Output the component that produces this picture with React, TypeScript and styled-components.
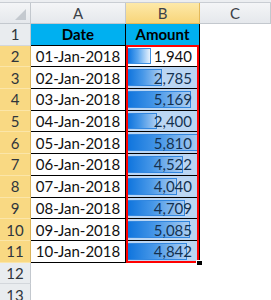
import React from "react";
import styled, { createGlobalStyle, css } from "styled-components";

const GlobalStyle = createGlobalStyle`
  html, body {
    margin: 0;
    padding: 0;
    background: #ffffff;
    overflow: hidden;
  }
  body {
    font-family: "Lato", "Liberation Sans", sans-serif;
  }
`;

const rows = [
  { date: "01-Jan-2018", amount: 1940 },
  { date: "02-Jan-2018", amount: 2785 },
  { date: "03-Jan-2018", amount: 5169 },
  { date: "04-Jan-2018", amount: 2400 },
  { date: "05-Jan-2018", amount: 5810 },
  { date: "06-Jan-2018", amount: 4522 },
  { date: "07-Jan-2018", amount: 4040 },
  { date: "08-Jan-2018", amount: 4709 },
  { date: "09-Jan-2018", amount: 5085 },
  { date: "10-Jan-2018", amount: 4842 },
];

const maxAmount = Math.max(...rows.map((r) => r.amount));
const BAR_SPACE = 72;

const Sheet = styled.div`
  display: grid;
  grid-template-columns: 31px 95px 74px 71px;
  grid-template-rows: 3px 21px repeat(13, 21.7px);
  width: 271px;
  height: 300px;
  overflow: hidden;
  font-size: 15px;
  color: #111;
`;

const TopStrip = styled.div`
  grid-column: 1 / -1;
  background: #eceef1;
  border-bottom: 1px solid #c9cdd3;
  box-sizing: border-box;
`;

const Corner = styled.div`
  display: flex;
  align-items: flex-end;
  justify-content: flex-end;
  padding: 0 4px 3px 0;
  background: linear-gradient(#f4f5f7, #e5e8ec);
  border-right: 1px solid #c3c8ce;
  border-bottom: 1px solid #c3c8ce;
  box-sizing: border-box;
`;

const ColHeader = styled.div<{ $active?: boolean }>`
  display: flex;
  align-items: center;
  justify-content: center;
  color: #3c4148;
  font-size: 15px;
  box-sizing: border-box;
  border-right: 1px solid #c3c8ce;
  border-bottom: 1px solid #c3c8ce;
  background: linear-gradient(#f4f5f7, #e5e8ec);
  ${(p) =>
    p.$active &&
    css`
      background: linear-gradient(#fde9a9, #f8d57a);
      border-right-color: #e4b95a;
      border-bottom-color: #e4b95a;
    `}
`;

const RowHeader = styled.div<{ $active?: boolean }>`
  display: flex;
  align-items: center;
  justify-content: center;
  color: #2f353c;
  font-size: 15px;
  box-sizing: border-box;
  background: #e9ecef;
  border-right: 1px solid #c3c8ce;
  border-bottom: 1px solid #d3d7dc;
  ${(p) =>
    p.$active &&
    css`
      background: #f9d983;
      border-right-color: #d9b35a;
      border-bottom-color: #fbe5a8;
    `}
`;

const Cell = styled.div<{ $head?: boolean }>`
  display: flex;
  align-items: center;
  justify-content: center;
  box-sizing: border-box;
  border-right: 1px solid #000;
  border-bottom: 1px solid #000;
  background: #fff;
  white-space: nowrap;
  ${(p) =>
    p.$head &&
    css`
      background: #00b0f0;
      font-weight: 700;
      color: #000;
    `}
`;

const AmountCell = styled.div<{ $tinted?: boolean; $first?: boolean; $last?: boolean }>`
  position: relative;
  display: flex;
  align-items: center;
  justify-content: flex-end;
  padding-right: 7px;
  box-sizing: border-box;
  border-right: 1px solid #000;
  border-bottom: 1px solid #000;
  background: #fff;

  &::before {
    content: "";
    position: absolute;
    left: 0;
    right: 0;
    top: ${(p) => (p.$first ? "-1px" : "0")};
    bottom: ${(p) => (p.$last ? "-1px" : "-1px")};
    border-left: 2px solid #ff0000;
    border-right: 2px solid #ff0000;
    border-top: ${(p) => (p.$first ? "2px solid #ff0000" : "none")};
    border-bottom: ${(p) => (p.$last ? "2px solid #ff0000" : "none")};
    z-index: 3;
    pointer-events: none;
  }

  ${(p) =>
    p.$tinted &&
    css`
      &::after {
        content: "";
        position: absolute;
        inset: 0;
        background: rgba(30, 120, 215, 0.3);
        z-index: 2;
      }
    `}
`;

const DataBar = styled.div`
  position: absolute;
  left: 1px;
  top: 2px;
  bottom: 2px;
  box-sizing: border-box;
  border: 1px solid #3b8fe2;
  background: linear-gradient(to right, #0a74e0, #5aa6ef 45%, #e8f2fd);
`;

const Value = styled.span`
  position: relative;
  z-index: 1;
`;

const FillHandle = styled.div`
  position: absolute;
  right: -3px;
  bottom: -3px;
  width: 5px;
  height: 4px;
  background: #000;
  border-left: 1px solid #fff;
  border-top: 1px solid #fff;
  z-index: 4;
`;

const Blank = styled.div`
  background: #fff;
`;

export default function App() {
  return (
    <>
      <GlobalStyle />
      <Sheet>
        <TopStrip />
        <Corner>
          <svg width="11" height="11" viewBox="0 0 11 11">
            <polygon points="11,0 11,11 0,11" fill="#c4c9cf" />
          </svg>
        </Corner>
        <ColHeader>A</ColHeader>
        <ColHeader $active>B</ColHeader>
        <ColHeader>C</ColHeader>

        <RowHeader>1</RowHeader>
        <Cell $head>Date</Cell>
        <Cell $head>Amount</Cell>
        <Blank />

        {rows.map((r, i) => (
          <React.Fragment key={r.date}>
            <RowHeader $active>{i + 2}</RowHeader>
            <Cell>{r.date}</Cell>
            <AmountCell
              $tinted={i > 0}
              $first={i === 0}
              $last={i === rows.length - 1}
            >
              <DataBar
                style={{ width: `${Math.round((r.amount / maxAmount) * BAR_SPACE)}px` }}
              />
              <Value>{r.amount.toLocaleString("en-US")}</Value>
              {i === rows.length - 1 && <FillHandle />}
            </AmountCell>
            <Blank />
          </React.Fragment>
        ))}

        <RowHeader>12</RowHeader>
        <Blank />
        <Blank />
        <Blank />
        <RowHeader>13</RowHeader>
        <Blank />
        <Blank />
        <Blank />
      </Sheet>
    </>
  );
}
